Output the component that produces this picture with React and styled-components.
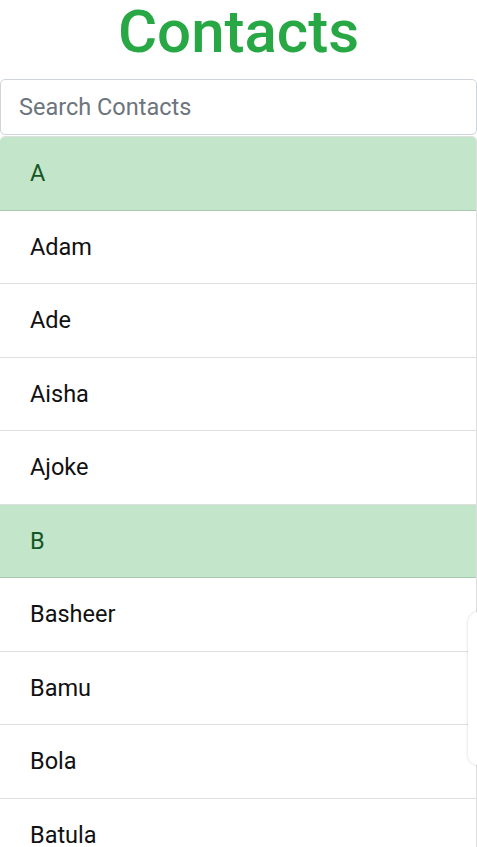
import React from 'react'
import styled, { createGlobalStyle } from 'styled-components'

const GlobalStyle = createGlobalStyle`
  * { box-sizing: border-box; }
  body {
    margin: 0;
    font-family: Roboto, "Liberation Sans", sans-serif;
    background: #fff;
    overflow: hidden;
  }
`

const Page = styled.div`
  width: 477px;
  position: relative;
`

const Title = styled.h1`
  margin: 0 0 15px;
  font-size: 60px;
  line-height: 64px;
  font-weight: 500;
  text-align: center;
  color: #28a745;
`

const Search = styled.input`
  display: block;
  width: 477px;
  height: 56px;
  margin: 0 0 1px;
  padding: 0 18px;
  border: 1px solid #ced4da;
  border-radius: 5px;
  font-family: inherit;
  font-size: 23.5px;
  color: #495057;
  outline: none;
  &::placeholder {
    color: #6c757d;
  }
`

const List = styled.ul`
  list-style: none;
  margin: 0;
  padding: 0;
  width: 477px;
  border: 1px solid rgba(0, 0, 0, 0.125);
  border-left: none;
  border-bottom: none;
  border-radius: 5px 5px 0 0;
  overflow: hidden;
`

const Item = styled.li`
  padding: 18px 30px;
  line-height: 36.5px;
  font-size: 23.5px;
  border-bottom: 1px solid rgba(0, 0, 0, 0.125);
  background: ${p => (p.$header ? '#c3e6cb' : '#fff')};
  color: ${p => (p.$header ? '#155724' : '#111')};
`

const SideIndex = styled.div`
  position: absolute;
  top: 612px;
  left: 468px;
  width: 40px;
  height: 153px;
  background: #fff;
  border-radius: 10px;
  box-shadow: 0 0 3px rgba(0, 0, 0, 0.18);
`

const groups = [
  { letter: 'A', names: ['Adam', 'Ade', 'Aisha', 'Ajoke'] },
  { letter: 'B', names: ['Basheer', 'Bamu', 'Bola', 'Batula', 'Bisi'] },
]

export default function App() {
  return (
    <Page>
      <GlobalStyle />
      <Title>Contacts</Title>
      <Search placeholder="Search Contacts" />
      <List>
        {groups.map(g => (
          <React.Fragment key={g.letter}>
            <Item $header>{g.letter}</Item>
            {g.names.map(n => (
              <Item key={n}>{n}</Item>
            ))}
          </React.Fragment>
        ))}
      </List>
      <SideIndex />
    </Page>
  )
}
